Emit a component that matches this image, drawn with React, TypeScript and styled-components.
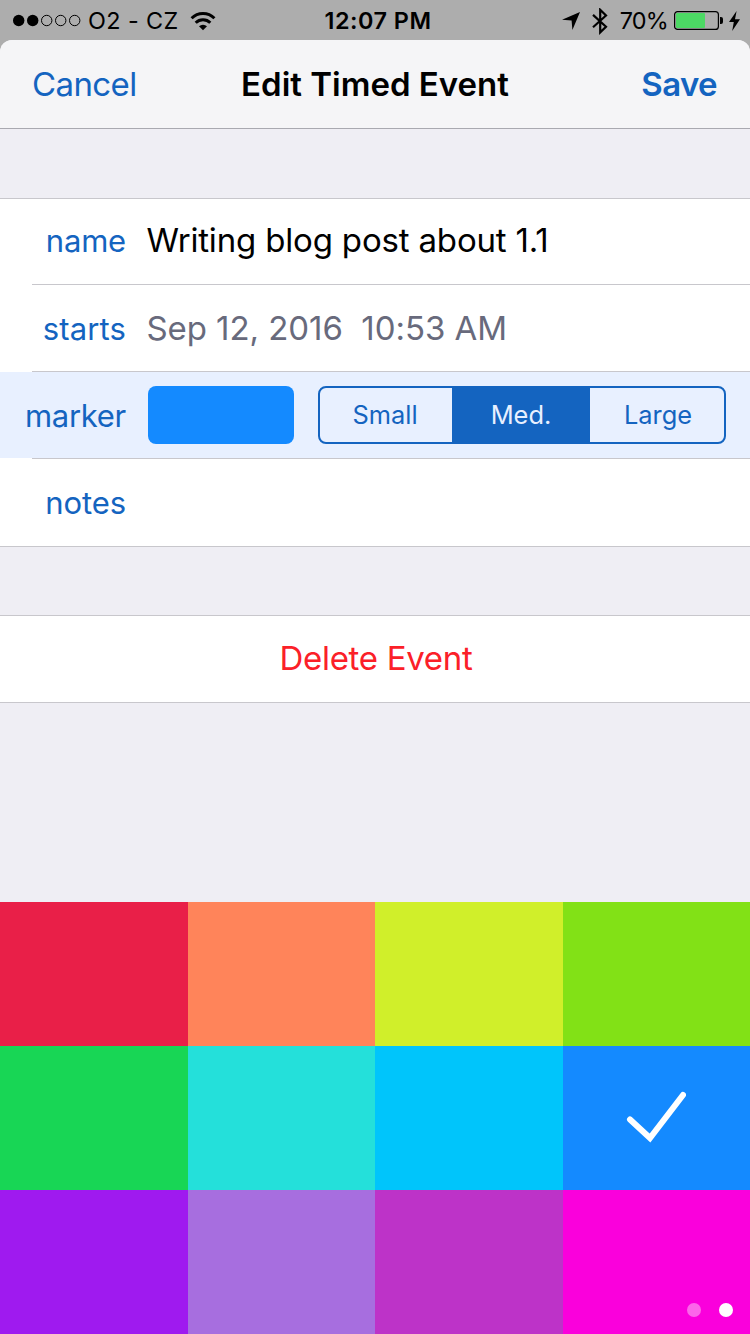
import React, { useState } from 'react';
import styled, { createGlobalStyle } from 'styled-components';

const blue = '#1464c0';

const GlobalStyle = createGlobalStyle`
  * { box-sizing: border-box; }
  body {
    margin: 0;
    background: #adadad;
    font-family: Inter, "Liberation Sans", sans-serif;
    -webkit-font-smoothing: antialiased;
  }
  button { font: inherit; color: inherit; background: none; border: 0; padding: 0; margin: 0; cursor: pointer; }
`;

const Screen = styled.main`
  width: 750px;
  height: 1334px;
  display: flex;
  flex-direction: column;
  overflow: hidden;
`;

const StatusBar = styled.div`
  flex: none;
  height: 40px;
  display: grid;
  grid-template-columns: 1fr auto 1fr;
  align-items: center;
  padding: 1px 10px 0 13px;
  font-size: 23.4px;
  line-height: 40px;
  color: #000;
`;

const StatusGroup = styled.div<{ $end?: boolean }>`
  display: flex;
  align-items: center;
  justify-content: ${(p) => (p.$end ? 'flex-end' : 'flex-start')};
  white-space: pre;
`;

const Clock = styled.div`
  font-weight: 600;
  letter-spacing: 0.5px;
  padding-left: 3px;
`;

const Carrier = styled.span`
  margin: 0 11px 0 7px;
  letter-spacing: 0.4px;
`;

const Percent = styled.span`
  margin: 0 6px 0 12px;
  letter-spacing: -0.8px;
`;

const Glyph = styled.svg<{ $gap?: number }>`
  display: block;
  flex: none;
  margin-left: ${(p) => p.$gap ?? 0}px;
`;

const Sheet = styled.section`
  flex: 1;
  display: flex;
  flex-direction: column;
  background: #efeef4;
  border-radius: 12px 12px 0 0;
  overflow: hidden;
`;

const NavBar = styled.header`
  flex: none;
  height: 89px;
  display: grid;
  grid-template-columns: 1fr auto 1fr;
  align-items: center;
  padding: 0 32px;
  background: #f5f5f7;
  border-bottom: 1px solid #a9a9b0;
`;

const NavButton = styled.button<{ $end?: boolean }>`
  justify-self: ${(p) => (p.$end ? 'end' : 'start')};
  padding-right: ${(p) => (p.$end ? 1 : 0)}px;
  font-size: 33px;
  line-height: 40px;
  font-weight: ${(p) => (p.$end ? 600 : 400)};
  letter-spacing: -0.6px;
  color: ${blue};
`;

const Title = styled.h1`
  margin: 0;
  font-size: 33px;
  line-height: 40px;
  font-weight: 600;
  color: #000;
`;

const Group = styled.div<{ $top: number }>`
  flex: none;
  margin-top: ${(p) => p.$top}px;
  background: #fff;
  border-top: 1px solid #c8c7cc;
  border-bottom: 1px solid #c8c7cc;
`;

const Row = styled.div<{ $height: number; $active?: boolean }>`
  display: flex;
  align-items: center;
  height: ${(p) => p.$height}px;
  padding-right: 24px;
  background: ${(p) => (p.$active ? '#e8f0ff' : '#fff')};
`;

const Divider = styled.hr`
  height: 1px;
  margin: 0 0 0 32px;
  border: 0;
  background: #c8c7cc;
`;

const Label = styled.span<{ $spacing?: number; $drop?: number; $lift?: number }>`
  flex: none;
  width: 126px;
  margin-right: 21px;
  padding-top: ${(p) => p.$drop ?? 0}px;
  padding-bottom: ${(p) => p.$lift ?? 0}px;
  text-align: right;
  font-size: 31px;
  line-height: 40px;
  letter-spacing: ${(p) => p.$spacing ?? 0}px;
  color: ${blue};
`;

const Value = styled.span<{ $muted?: boolean; $lift?: number }>`
  margin-left: -0.6px;
  padding-bottom: ${(p) => p.$lift ?? 0}px;
  font-size: 33px;
  line-height: 40px;
  white-space: pre;
  letter-spacing: ${(p) => (p.$muted ? -0.05 : -0.17)}px;
  color: ${(p) => (p.$muted ? '#686a7c' : '#000')};
`;

const Swatch = styled.button`
  flex: none;
  width: 146px;
  height: 58px;
  margin: 0 24px 0 1px;
  border-radius: 8px;
`;

const Segments = styled.div`
  flex: none;
  width: 408px;
  height: 58px;
  display: grid;
  grid-template-columns: 132px 138px 134px;
  border: 2px solid ${blue};
  border-radius: 8px;
  overflow: hidden;
`;

const Segment = styled.button<{ $on: boolean }>`
  font-size: 25.4px;
  line-height: 54px;
  color: ${(p) => (p.$on ? '#e8f0ff' : blue)};
  background: ${(p) => (p.$on ? blue : 'transparent')};
  &:first-child { padding-right: 2px; }
  &:last-child { padding-left: 2px; }
`;

const DeleteButton = styled.button`
  display: block;
  width: 100%;
  height: 86px;
  padding: 0 0 2px 2px;
  font-size: 33px;
  letter-spacing: -0.3px;
  color: #fb2028;
`;

const Palette = styled.div`
  position: relative;
  flex: none;
  margin-top: auto;
  display: grid;
  grid-template-columns: 188px 187px 188px 187px;
  grid-auto-rows: 144px;
`;

const ColorCell = styled.button<{ $color: string }>`
  display: flex;
  align-items: center;
  justify-content: center;
  padding: 0 2px 2px 0;
  background: ${(p) => p.$color};
`;

const Pager = styled.div`
  position: absolute;
  right: 17px;
  bottom: 17px;
  display: flex;
  gap: 18px;
`;

const PageDot = styled.span<{ $on?: boolean }>`
  width: 14px;
  height: 14px;
  border-radius: 50%;
  background: ${(p) => (p.$on ? '#fff' : 'rgba(255, 255, 255, 0.4)')};
`;

const colors = [
  '#e91f48', '#ff845a', '#d0ef2a', '#82e116',
  '#18d655', '#24e0da', '#00c5fb', '#148aff',
  '#9f1aef', '#a76edf', '#bd33c8', '#fa00dc',
];
const sizes = ['Small', 'Med.', 'Large'];

const Signal = () => (
  <Glyph width="68" height="14" viewBox="0 0 68 14">
    {[0, 1, 2, 3, 4].map((i) => (
      <circle
        key={i}
        cx={5.7 + i * 14}
        cy="6.5"
        r={i < 2 ? 5.7 : 5.2}
        fill={i < 2 ? '#000' : 'none'}
        stroke={i < 2 ? 'none' : '#000'}
      />
    ))}
  </Glyph>
);

const Wifi = () => (
  <Glyph width="26" height="20" viewBox="0 0 26 20" fill="none" stroke="#000" strokeWidth="3">
    <path d="M1.6 7.2 A16.2 16.2 0 0 1 24.4 7.2" />
    <path d="M5.7 11.8 A10.4 10.4 0 0 1 20.3 11.8" />
    <path d="M13 19.2 L9 15.2 A6 6 0 0 1 17 15.2 Z" fill="#000" stroke="none" />
  </Glyph>
);

const Location = () => (
  <Glyph width="18" height="18" viewBox="0 0 18 18">
    <path d="M18 0 L10.4 18 L9.6 8.4 L0 7.8 Z" />
  </Glyph>
);

const Bluetooth = () => (
  <Glyph $gap={12} width="16" height="27" viewBox="0 0 16 27" fill="none" stroke="#000" strokeWidth="2.2">
    <path d="M1 6.9 L14 18.7 L8.2 24.4 V1.8 L14 7.5 L1 19.3" />
  </Glyph>
);

const Battery = () => (
  <Glyph width="49" height="20" viewBox="0 0 49 20">
    <rect x="0.6" y="0.6" width="43.8" height="17.8" rx="3" fill="none" stroke="#000" strokeWidth="1.2" />
    <rect x="2" y="2" width="29" height="15" rx="1" fill="#4cd964" />
    <path d="M46 6 h1 a2 2 0 0 1 2 2 v3 a2 2 0 0 1 -2 2 h-1 Z" />
  </Glyph>
);

const Bolt = () => (
  <Glyph $gap={6} width="11" height="20" viewBox="0 0 11 20">
    <path d="M7.6 0 L0 11 H4.8 L3.2 20 L11 8.2 H6 Z" />
  </Glyph>
);

const Check = () => (
  <svg width="60" height="52" viewBox="0 0 60 52" fill="none" stroke="#fff" strokeWidth="6" strokeLinecap="round">
    <path d="M4 28.5 L24 47 L57 4" />
  </svg>
);

export default function App() {
  const [size, setSize] = useState(1);
  const [color, setColor] = useState(7);

  return (
    <Screen>
      <GlobalStyle />
      <StatusBar>
        <StatusGroup>
          <Signal />
          <Carrier>O2 - CZ</Carrier>
          <Wifi />
        </StatusGroup>
        <Clock>12:07 PM</Clock>
        <StatusGroup $end>
          <Location />
          <Bluetooth />
          <Percent>70%</Percent>
          <Battery />
          <Bolt />
        </StatusGroup>
      </StatusBar>
      <Sheet>
        <NavBar>
          <NavButton>Cancel</NavButton>
          <Title>Edit Timed Event</Title>
          <NavButton $end>Save</NavButton>
        </NavBar>
        <Group $top={69}>
          <Row $height={85}>
            <Label $spacing={-0.2} $lift={2}>name</Label>
            <Value $lift={3}>Writing blog post about 1.1</Value>
          </Row>
          <Divider />
          <Row $height={86}>
            <Label $spacing={0.15} $drop={2}>starts</Label>
            <Value $muted>{'Sep 12, 2016  10:53 AM'}</Value>
          </Row>
          <Divider />
          <Row $height={86} $active>
            <Label $spacing={-0.3} $drop={2}>marker</Label>
            <Swatch aria-label="Marker color" style={{ background: colors[color] }} />
            <Segments>
              {sizes.map((name, i) => (
                <Segment key={name} $on={i === size} onClick={() => setSize(i)}>{name}</Segment>
              ))}
            </Segments>
          </Row>
          <Divider />
          <Row $height={87}>
            <Label $spacing={-0.1}>notes</Label>
          </Row>
        </Group>
        <Group $top={68}>
          <DeleteButton>Delete Event</DeleteButton>
        </Group>
        <Palette>
          {colors.map((c, i) => (
            <ColorCell key={c} $color={c} aria-label={c} onClick={() => setColor(i)}>
              {i === color && <Check />}
            </ColorCell>
          ))}
          <Pager>
            <PageDot />
            <PageDot $on />
          </Pager>
        </Palette>
      </Sheet>
    </Screen>
  );
}
